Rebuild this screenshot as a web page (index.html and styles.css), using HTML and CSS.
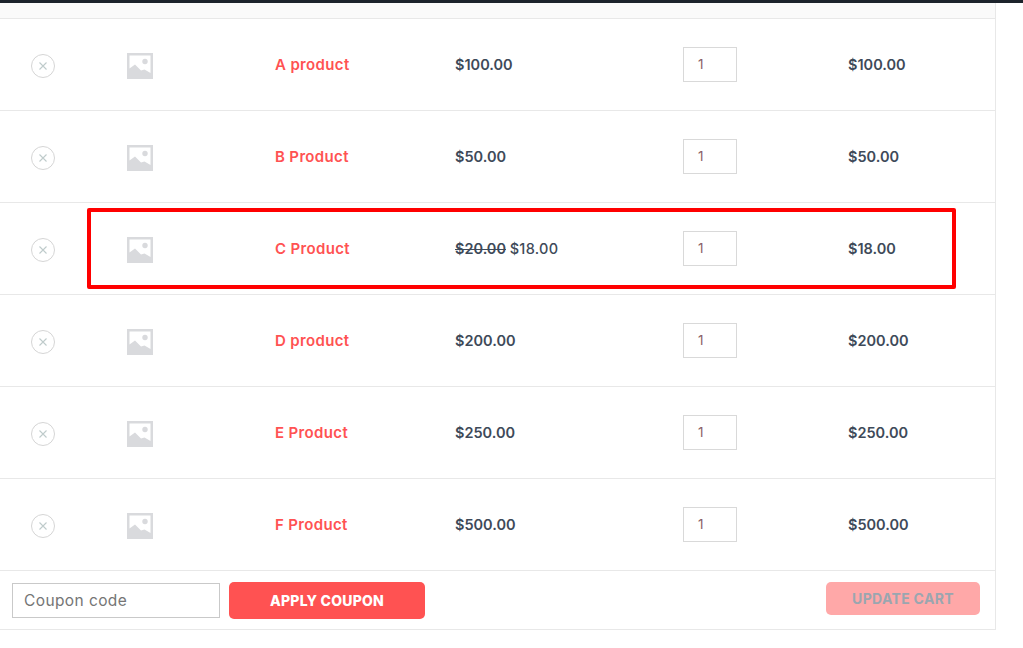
FILE: index.html
```html
<!DOCTYPE html>
<html lang="en">
<head>
<meta charset="utf-8">
<title>Cart</title>
<link rel="stylesheet" href="styles.css">
</head>
<body>
<svg class="defs" width="0" height="0" aria-hidden="true">
  <symbol id="ph" viewBox="0 0 26 26">
    <rect width="26" height="26" fill="#d9dadd"/>
    <path d="M2.500 2.500h21v17.500l-6-3.500-3.500 1L8 11.500l-5.500 4z" fill="#fff"/>
    <circle cx="18" cy="8.500" r="2.700" fill="#d9dadd"/>
  </symbol>
  <symbol id="rm" viewBox="0 0 24 24">
    <circle cx="12" cy="12" r="11.500" fill="#fff" stroke="#d5d5d5"/>
    <path d="M8.500 8.500l7 7M15.500 8.500l-7 7" stroke="#bfcbcb" stroke-width="1.100" fill="none"/>
  </symbol>
</svg>
<div class="topbar"></div>
<main class="cart">
  <div class="head"></div>
  <div class="row">
    <svg class="rm"><use href="#rm"/></svg><svg class="ph"><use href="#ph"/></svg>
    <a class="name">A product</a><span class="money">$100.00</span>
    <span class="qty">1</span><span class="money">$100.00</span>
  </div>
  <div class="row">
    <svg class="rm"><use href="#rm"/></svg><svg class="ph"><use href="#ph"/></svg>
    <a class="name">B Product</a><span class="money">$50.00</span>
    <span class="qty">1</span><span class="money">$50.00</span>
  </div>
  <div class="row">
    <svg class="rm"><use href="#rm"/></svg><svg class="ph"><use href="#ph"/></svg>
    <a class="name">C Product</a><span class="money"><del>$20.00</del> <ins>$18.00</ins></span>
    <span class="qty">1</span><span class="money">$18.00</span>
  </div>
  <div class="row">
    <svg class="rm"><use href="#rm"/></svg><svg class="ph"><use href="#ph"/></svg>
    <a class="name">D product</a><span class="money">$200.00</span>
    <span class="qty">1</span><span class="money">$200.00</span>
  </div>
  <div class="row">
    <svg class="rm"><use href="#rm"/></svg><svg class="ph"><use href="#ph"/></svg>
    <a class="name">E Product</a><span class="money">$250.00</span>
    <span class="qty">1</span><span class="money">$250.00</span>
  </div>
  <div class="row">
    <svg class="rm"><use href="#rm"/></svg><svg class="ph"><use href="#ph"/></svg>
    <a class="name">F Product</a><span class="money">$500.00</span>
    <span class="qty">1</span><span class="money">$500.00</span>
  </div>
  <div class="actions">
    <div class="coupon">Coupon code</div>
    <div class="btn apply">APPLY COUPON</div>
    <div class="btn update">UPDATE CART</div>
  </div>
</main>
<div class="highlight"></div>
</body>
</html>
```
FILE: styles.css
```css
* { box-sizing: border-box; }
html, body { margin: 0; height: 648px; overflow: hidden; background: #fff; }
body { font-family: "Inter", "Liberation Sans", sans-serif; position: relative; }
.defs { position: absolute; }
.topbar { height: 3px; background: #1c232b; }
.cart { width: 996px; border-right: 1px solid #e8e8e8; }
.head { height: 16px; background: #fafafa; border-bottom: 1px solid #e8e8e8; }
.row {
  display: grid;
  grid-template-columns: 86px 189px 180px 228px 165px 1fr;
  align-items: center;
  height: 92px;
  border-bottom: 1px solid #e8e8e8;
  font-size: 14.500px;
  font-weight: 600;
}
.rm { width: 24px; height: 24px; justify-self: center; margin-top: 2px; }
.ph { width: 26px; height: 26px; margin-left: 41px; margin-top: 2px; }
.name { color: #ff5252; margin-top: -1px; font-size: 15px; letter-spacing: 0.35px; }
.money { color: #3e4a59; margin-top: -1px; }
del { text-decoration: line-through; }
ins { text-decoration: none; font-weight: 500; letter-spacing: 0.3px; }
.qty {
  width: 54px;
  height: 35px;
  border: 1px solid #d9d9d9;
  color: #8a5f68;
  font-weight: 400;
  font-size: 13.500px;
  line-height: 33px;
  padding-left: 14px;
  margin-top: -1px;
}
.actions {
  display: flex;
  align-items: center;
  height: 59px;
  padding: 0 15px 0 12px;
  border-bottom: 1px solid #e8e8e8;
}
.coupon {
  width: 208px;
  height: 35px;
  border: 1px solid #c9c9c9;
  color: #757575;
  font-size: 15.500px;
  letter-spacing: 0.4px;
  line-height: 33px;
  padding-left: 11px;
}
.btn { font-size: 14px; font-weight: 800; color: #fff; display: flex; align-items: center; justify-content: center; border-radius: 5px; letter-spacing: 0.25px; }
.apply { width: 196px; height: 37px; background: #ff5252; margin-left: 9px; margin-top: 1px; }
.update { width: 154px; height: 33px; background: #ffa8a8; color: #9aa6b0; margin-left: auto; margin-top: -3px; font-weight: 700; letter-spacing: 0.33px; }
.highlight {
  position: absolute;
  left: 87px;
  top: 208px;
  width: 869px;
  height: 81px;
  border: 4px solid #ff0000;
  border-radius: 2px;
}
```
